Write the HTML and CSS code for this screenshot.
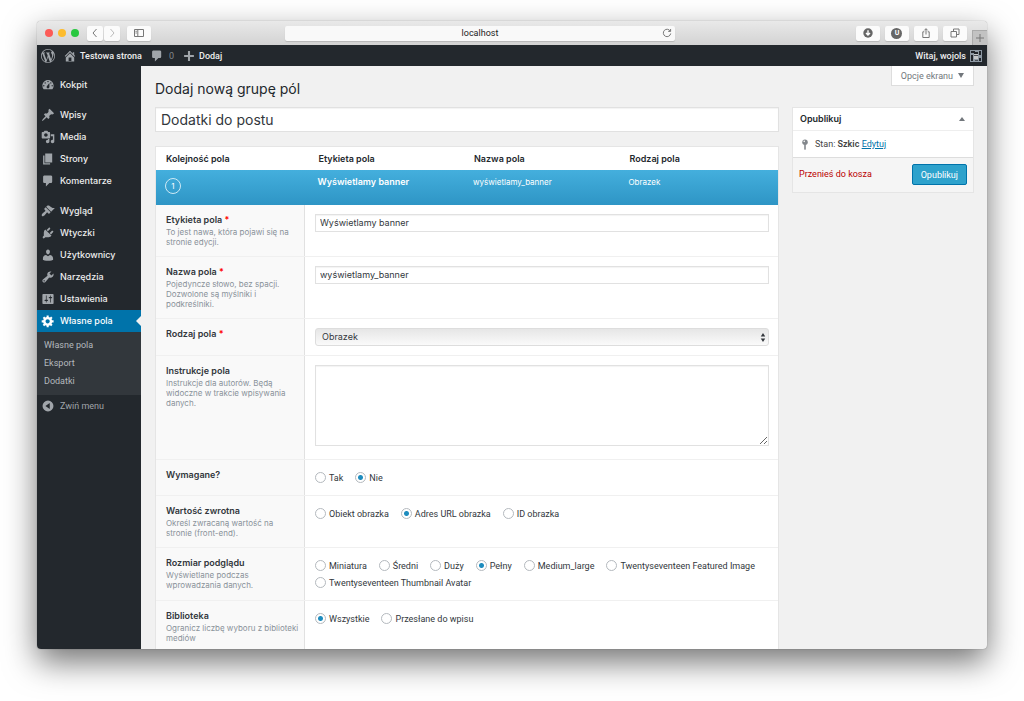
FILE: index.html
```html
<!DOCTYPE html>
<html lang="pl">
<head>
<meta charset="utf-8">
<title>Dodaj nową grupę pól</title>
<link rel="stylesheet" href="styles.css">
</head>
<body>
<svg class="sprite" aria-hidden="true">
  <symbol id="i-wp" viewBox="0 0 20 20"><path d="M20 10c0-5.51-4.49-10-10-10C4.48 0 0 4.49 0 10c0 5.52 4.48 10 10 10 5.51 0 10-4.48 10-10zM7.78 15.37L4.37 6.22c.55-.02 1.17-.08 1.17-.08.5-.06.44-1.13-.06-1.11 0 0-1.45.11-2.37.11-.18 0-.37 0-.58-.01C4.12 2.69 6.87 1.11 10 1.11c2.33 0 4.45.87 6.05 2.34-.68-.11-1.65.39-1.65 1.58 0 .74.45 1.36.9 2.1.35.61.55 1.36.55 2.46 0 1.49-1.4 5-1.4 5l-3.03-8.37c.54-.02.82-.17.82-.17.5-.05.44-1.25-.06-1.22 0 0-1.44.12-2.38.12-.87 0-2.33-.12-2.33-.12-.5-.03-.56 1.2-.06 1.22l.92.08 1.26 3.41zM17.41 10c.24-.64.74-1.87.43-4.25.7 1.29 1.05 2.71 1.05 4.25 0 3.29-1.73 6.24-4.4 7.78.97-2.59 1.94-5.2 2.92-7.78zM6.1 18.09C3.12 16.65 1.11 13.53 1.11 10c0-1.3.23-2.48.72-3.59C3.25 10.3 4.67 14.2 6.1 18.09zm4.03-6.63l2.58 6.98c-.86.29-1.76.45-2.71.45-.79 0-1.57-.11-2.29-.33.81-2.38 1.62-4.74 2.42-7.1z"/></symbol>
  <symbol id="i-home" viewBox="0 0 20 20"><path d="M16 8.5l1.53 1.53-1.06 1.06L10 4.6l-6.47 6.49-1.06-1.06L10 2.5l4 4v-2h2v4zm-6-2.46l6 5.99V18H4v-5.97zM12 17v-5H8v5h4z"/></symbol>
  <symbol id="i-comment" viewBox="0 0 20 20"><path d="M5 2h9c1.1 0 2 .9 2 2v7c0 1.1-.9 2-2 2h-2l-5 5v-5H5c-1.1 0-2-.9-2-2V4c0-1.1.9-2 2-2z"/></symbol>
  <symbol id="i-plus" viewBox="0 0 20 20"><path d="M17 8.5v3h-5.500v5.500h-3v-5.500H3v-3h5.500V3h3v5.500z"/></symbol>
  <symbol id="i-dash" viewBox="0 0 20 20"><path d="M3.76 16h12.48c1.1-1.37 1.76-3.11 1.76-5 0-4.42-3.58-8-8-8s-8 3.58-8 8c0 1.89.66 3.63 1.76 5zM10 4c.55 0 1 .45 1 1s-.45 1-1 1-1-.45-1-1 .45-1 1-1zM6 6c.55 0 1 .45 1 1s-.45 1-1 1-1-.45-1-1 .45-1 1-1zm8 0c.55 0 1 .45 1 1s-.45 1-1 1-1-.45-1-1 .45-1 1-1zm-5.37 5.550L12 7v6c0 1.100-.9 2-2 2s-2-.9-2-2c0-.57.24-1.080.63-1.450zM4 10c.55 0 1 .45 1 1s-.45 1-1 1-1-.45-1-1 .45-1 1-1zm12 0c.55 0 1 .45 1 1s-.45 1-1 1-1-.45-1-1 .45-1 1-1z" fill-rule="evenodd"/></symbol>
  <symbol id="i-pin" viewBox="0 0 20 20"><path d="M10.44 3.020l1.820-1.820 6.360 6.350-1.830 1.820c-1.050-.68-2.480-.57-3.410.36l-.75.75c-.92.93-1.040 2.350-.35 3.410l-1.830 1.820-2.410-2.410-2.800 2.790c-.42.42-3.380 2.710-3.800 2.290s1.860-3.390 2.280-3.810l2.790-2.790L4.100 9.360l1.830-1.820c1.050.69 2.480.57 3.400-.36l.75-.75c.93-.92 1.050-2.350.36-3.410z"/></symbol>
  <symbol id="i-media" viewBox="0 0 20 20"><path d="M13 11V4c0-.55-.45-1-1-1h-1.670L9 1H5L3.670 3H2c-.55 0-1 .45-1 1v7c0 .55.45 1 1 1h10c.55 0 1-.45 1-1zM7 4.500c1.380 0 2.500 1.120 2.500 2.500S8.380 9.500 7 9.500 4.500 8.380 4.500 7 5.620 4.500 7 4.500zM14 6h5v10.500c0 1.380-1.120 2.500-2.500 2.500S14 17.880 14 16.500s1.120-2.500 2.500-2.500c.17 0 .34.02.5.05V9h-3V6zm-4 8.050V13h2v3.500c0 1.380-1.120 2.500-2.500 2.500S7 17.880 7 16.500 8.120 14 9.500 14c.17 0 .34.02.5.05z"/></symbol>
  <symbol id="i-page" viewBox="0 0 20 20"><path d="M6 15V2h10v13H6zm-1 1h8v2H3V5h2v11z"/></symbol>
  <symbol id="i-brush" viewBox="0 0 20 20"><path d="M14.480 11.060L7.410 3.990l1.500-1.500c.5-.56 2.300-.47 3.510.32 1.210.8 1.430 1.280 2.910 2.100 1.180.64 2.450 1.260 4.450.85zm-.71.71L6.700 4.700 4.930 6.470c-.39.39-.39 1.020 0 1.410l1.060 1.060c.39.39.39 1.030 0 1.420-.6.6-1.430 1.110-2.210 1.690-.35.26-.7.53-1.010.84C1.430 14.230.4 16.080 1.400 17.070c.99 1 2.840-.03 4.180-1.360.31-.31.58-.66.85-1.020.57-.78 1.080-1.610 1.690-2.210.39-.39 1.020-.39 1.410 0l1.060 1.060c.39.39 1.020.39 1.410 0z"/></symbol>
  <symbol id="i-plug" viewBox="0 0 20 20"><path d="M13.110 4.360L9.870 7.600 8 5.730l3.240-3.240c.35-.34 1.050-.2 1.560.32.52.51.66 1.210.31 1.550zm-8 1.770l.91-1.120 9.010 9.010-1.190.84c-.71.71-2.630 1.160-3.820 1.160H6.140L4.900 17.260c-.59.59-1.540.59-2.120 0-.59-.58-.59-1.530 0-2.120l1.240-1.240v-3.880c0-1.130.4-3.190 1.090-3.890zm7.260 3.970l3.240-3.240c.34-.35 1.040-.21 1.550.31.52.51.66 1.210.31 1.550l-3.240 3.250z"/></symbol>
  <symbol id="i-user" viewBox="0 0 20 20"><path d="M10 9.250c-2.270 0-2.730-3.440-2.730-3.440C7 4.020 7.820 2 9.970 2c2.160 0 2.980 2.020 2.710 3.810 0 0-.41 3.440-2.680 3.440zm0 2.570L12.720 10c2.390 0 4.520 2.330 4.520 4.530v2.490s-3.650 1.130-7.240 1.130c-3.650 0-7.240-1.130-7.240-1.130v-2.490c0-2.250 1.940-4.480 4.470-4.480z"/></symbol>
  <symbol id="i-tool" viewBox="0 0 20 20"><path d="M16.680 9.770c-1.340 1.340-3.300 1.670-4.950.99l-5.410 6.520c-.99.99-2.590.99-3.580 0s-.99-2.590 0-3.570l6.520-5.420c-.68-1.650-.35-3.610.99-4.950 1.280-1.280 3.120-1.620 4.720-1.060l-2.890 2.890 2.820 2.820 2.860-2.870c.53 1.580.18 3.390-1.080 4.650zM3.810 16.210c.4.39 1.040.39 1.430 0 .4-.4.4-1.040 0-1.430-.39-.4-1.030-.4-1.430 0-.39.39-.39 1.030 0 1.430z"/></symbol>
  <symbol id="i-settings" viewBox="0 0 20 20"><path d="M18 16V4c0-.55-.45-1-1-1H3c-.55 0-1 .45-1 1v12c0 .55.45 1 1 1h14c.55 0 1-.45 1-1zM8 11h1c.55 0 1 .45 1 1s-.45 1-1 1H8v1.500c0 .28-.22.5-.5.5s-.5-.22-.5-.5V13H6c-.55 0-1-.45-1-1s.45-1 1-1h1V5.500c0-.28.22-.5.5-.5s.5.22.5.5V11zm5-2h-1c-.55 0-1-.45-1-1s.45-1 1-1h1V5.500c0-.28.22-.5.5-.5s.5.22.5.5V7h1c.55 0 1 .45 1 1s-.45 1-1 1h-1v5.500c0 .28-.22.5-.5.5s-.5-.22-.5-.5V9z"/></symbol>
  <symbol id="i-gear" viewBox="0 0 20 20"><path d="M18 12h-2.180c-.17.7-.44 1.350-.81 1.930l1.540 1.540-2.100 2.100-1.540-1.540c-.58.36-1.230.63-1.910.79V19H8v-2.180c-.68-.16-1.330-.43-1.910-.79l-1.540 1.540-2.120-2.120 1.540-1.540c-.36-.58-.63-1.230-.79-1.910H1V9.030h2.170c.16-.7.44-1.350.8-1.940L2.430 5.550l2.100-2.100 1.540 1.540c.58-.37 1.240-.64 1.930-.81V2h3v2.180c.68.16 1.330.43 1.910.79l1.540-1.540 2.120 2.120-1.540 1.540c.36.59.64 1.240.8 1.940H18V12zm-8.500 1.500c1.660 0 3-1.340 3-3s-1.340-3-3-3-3 1.340-3 3 1.340 3 3 3z"/></symbol>
  <symbol id="i-collapse" viewBox="0 0 20 20"><path fill-rule="evenodd" d="M10 2.200a7.800 7.800 0 1 0 0 15.600 7.800 7.800 0 0 0 0-15.600zM12.500 5.800v8.400L6.300 10z"/></symbol>
</svg>

<div class="window">
  <header class="toolbar">
    <div class="lights"><span class="light red"></span><span class="light amber"></span><span class="light green"></span></div>
    <div class="history">
      <button class="tool" aria-label="Wstecz"><svg viewBox="0 0 10 10"><path d="M6.500 1 3 5l3.500 4"/></svg></button>
      <button class="tool off" aria-label="Dalej"><svg viewBox="0 0 10 10"><path d="M3.500 1 7 5 3.500 9"/></svg></button>
    </div>
    <button class="tool wide" aria-label="Pasek boczny"><svg viewBox="0 0 10 10"><path d="M.5 1.500h9v7h-9zM3.800 1.500v7M1.500 3.300h1.300M1.500 5h1.300"/></svg></button>
    <span class="space-left"></span>
    <div class="address"><span>localhost</span><svg viewBox="0 0 10 10"><path d="M8.300 3.200A3.700 3.700 0 1 0 8.700 5.500M8.600 1v2.400H6.200"/></svg></div>
    <span class="space-right"></span>
    <div class="tools">
      <button class="tool wide" aria-label="Pobrane"><svg viewBox="0 0 10 10"><circle cx="5" cy="5" r="4.700" fill="#666" stroke="none"/><path d="M5 2.300v4.600M3 5.100l2 2 2-2" stroke="#fff" stroke-width="1.400"/></svg></button>
      <button class="tool wide" aria-label="uBlock"><span class="badge">U</span></button>
      <button class="tool wide" aria-label="Udostępnij"><svg viewBox="0 0 10 10"><path d="M3.300 3.800H1.800v5.700h6.400V3.800H6.700M5 6.500V.8M3.300 2.400 5 .7l1.700 1.700"/></svg></button>
      <button class="tool wide" aria-label="Karty"><svg viewBox="0 0 10 10"><path d="M1 3.500h5.500V9H1zM3.500 3.500V1H9v5.500H6.500"/></svg></button>
    </div>
    <button class="newtab" aria-label="Nowa karta"><svg viewBox="0 0 10 10"><path d="M5 1v8M1 5h8"/></svg></button>
  </header>

  <nav class="adminbar">
    <a href="#" aria-label="WordPress"><svg class="ico"><use href="#i-wp"/></svg></a>
    <a href="#"><svg class="ico"><use href="#i-home"/></svg>Testowa strona</a>
    <a href="#" class="count"><svg class="ico"><use href="#i-comment"/></svg>0</a>
    <a href="#"><svg class="ico"><use href="#i-plus"/></svg>Dodaj</a>
    <a href="#" class="account">Witaj, wojols
      <svg class="avatar" viewBox="0 0 12 12"><rect width="12" height="12" fill="#8d98a3"/><path fill="#20242a" d="M1 1h4v2H1zM9 1h2v4H9zM1 5h2v6H1zM9 8h2v3H9zM4 2h4v2H4z"/><path fill="#c4c7ca" d="M4 4h4v5H4z"/><path fill="#4b5057" d="M4 5h4v1H4zM5 10h3v1H5z"/></svg></a>
  </nav>

  <div class="body">
    <aside class="sidebar">
      <ul class="menu">
        <li><a href="#"><svg class="ico"><use href="#i-dash"/></svg>Kokpit</a></li>
        <li class="group"><a href="#"><svg class="ico"><use href="#i-pin"/></svg>Wpisy</a></li>
        <li><a href="#"><svg class="ico"><use href="#i-media"/></svg>Media</a></li>
        <li><a href="#"><svg class="ico"><use href="#i-page"/></svg>Strony</a></li>
        <li><a href="#"><svg class="ico"><use href="#i-comment"/></svg>Komentarze</a></li>
        <li class="group"><a href="#"><svg class="ico"><use href="#i-brush"/></svg>Wygląd</a></li>
        <li><a href="#"><svg class="ico"><use href="#i-plug"/></svg>Wtyczki</a></li>
        <li><a href="#"><svg class="ico"><use href="#i-user"/></svg>Użytkownicy</a></li>
        <li><a href="#"><svg class="ico"><use href="#i-tool"/></svg>Narzędzia</a></li>
        <li><a href="#"><svg class="ico"><use href="#i-settings"/></svg>Ustawienia</a></li>
        <li class="current"><a href="#"><svg class="ico"><use href="#i-gear"/></svg>Własne pola</a>
          <ul class="submenu">
            <li><a href="#">Własne pola</a></li>
            <li><a href="#">Eksport</a></li>
            <li><a href="#">Dodatki</a></li>
          </ul>
        </li>
        <li class="collapse"><button><svg class="ico"><use href="#i-collapse"/></svg>Zwiń menu</button></li>
      </ul>
    </aside>

    <main class="content">
      <div class="primary">
        <h1>Dodaj nową grupę pól</h1>
        <input class="title" type="text" value="Dodatki do postu" aria-label="Tytuł">
        <section class="panel">
          <table class="fields">
            <thead><tr><th>Kolejność pola</th><th>Etykieta pola</th><th>Nazwa pola</th><th>Rodzaj pola</th></tr></thead>
            <tbody><tr><td><span class="order">1</span></td><td><strong>Wyświetlamy banner</strong></td><td>wyświetlamy_banner</td><td>Obrazek</td></tr></tbody>
          </table>
          <div class="row">
            <div class="label"><label for="f-label">Etykieta pola <em>*</em></label><p>To jest nawa, która pojawi się na stronie edycji.</p></div>
            <div class="value"><input id="f-label" type="text" value="Wyświetlamy banner"></div>
          </div>
          <div class="row">
            <div class="label"><label for="f-name">Nazwa pola <em>*</em></label><p>Pojedyncze słowo, bez spacji. Dozwolone są myślniki i podkreślniki.</p></div>
            <div class="value"><input id="f-name" type="text" value="wyświetlamy_banner"></div>
          </div>
          <div class="row">
            <div class="label"><label for="f-type">Rodzaj pola <em>*</em></label></div>
            <div class="value"><div class="select"><select id="f-type"><option>Obrazek</option></select><svg viewBox="0 0 6 10"><path d="M3 0l2.500 4h-5zM3 10L.5 6h5z"/></svg></div></div>
          </div>
          <div class="row">
            <div class="label"><label for="f-help">Instrukcje pola</label><p>Instrukcje dla autorów. Będą widoczne w trakcie wpisywania danych.</p></div>
            <div class="value"><textarea id="f-help"></textarea></div>
          </div>
          <div class="row">
            <div class="label"><b id="l-req">Wymagane?</b></div>
            <div class="value radios" role="radiogroup" aria-labelledby="l-req">
              <label><input type="radio" name="req">Tak</label>
              <label><input type="radio" name="req" checked>Nie</label>
            </div>
          </div>
          <div class="row">
            <div class="label"><b id="l-ret">Wartość zwrotna</b><p>Określ zwracaną wartość na stronie (front-end).</p></div>
            <div class="value radios" role="radiogroup" aria-labelledby="l-ret">
              <label><input type="radio" name="ret">Obiekt obrazka</label>
              <label><input type="radio" name="ret" checked>Adres URL obrazka</label>
              <label><input type="radio" name="ret">ID obrazka</label>
            </div>
          </div>
          <div class="row">
            <div class="label"><b id="l-size">Rozmiar podglądu</b><p>Wyświetlane podczas wprowadzania danych.</p></div>
            <div class="value radios" role="radiogroup" aria-labelledby="l-size">
              <label><input type="radio" name="size">Miniatura</label>
              <label><input type="radio" name="size">Średni</label>
              <label><input type="radio" name="size">Duży</label>
              <label><input type="radio" name="size" checked>Pełny</label>
              <label><input type="radio" name="size">Medium_large</label>
              <label><input type="radio" name="size">Twentyseventeen Featured Image</label>
              <label><input type="radio" name="size">Twentyseventeen Thumbnail Avatar</label>
            </div>
          </div>
          <div class="row">
            <div class="label"><b id="l-lib">Biblioteka</b><p>Ogranicz liczbę wyboru z biblioteki mediów</p></div>
            <div class="value radios" role="radiogroup" aria-labelledby="l-lib">
              <label><input type="radio" name="lib" checked>Wszystkie</label>
              <label><input type="radio" name="lib">Przesłane do wpisu</label>
            </div>
          </div>
        </section>
      </div>

      <div class="secondary">
        <button class="screen-options">Opcje ekranu <span class="tri down"></span></button>
        <section class="publish">
          <h2>Opublikuj <span class="tri up"></span></h2>
          <p class="status"><svg viewBox="0 0 8 14"><circle cx="4" cy="4" r="3.500"/><path d="M3 7h2v6l-1 1-1-1z"/><circle cx="3" cy="3" r="1" fill="#fff"/></svg><span>Stan: <b>Szkic</b> <a href="#">Edytuj</a></span></p>
          <div class="actions"><a href="#">Przenieś do kosza</a><button>Opublikuj</button></div>
        </section>
      </div>
    </main>
  </div>
</div>
</body>
</html>
```
FILE: styles.css
```css
* { box-sizing: border-box; }

body {
  margin: 0;
  height: 100vh;
  padding: 21px 37px 52px;
  display: flex;
  background: #fff;
  color: #32373c;
  font: 9px/12px Roboto, "Liberation Sans", sans-serif;
}

h1, h2, p, ul { margin: 0; padding: 0; }
ul { list-style: none; }
a { text-decoration: none; }
button, input, select, textarea { font: inherit; color: inherit; margin: 0; }
button { border: 0; padding: 0; background: none; }
h1, h2, .menu, .fields, .label, input[type="text"], textarea, select {
  font-family: Inter, "Liberation Sans", sans-serif;
}
.sprite { position: absolute; width: 0; height: 0; }
.ico { width: 14px; height: 14px; flex: none; fill: #a0a5aa; }

.window {
  flex: 1;
  min-width: 0;
  display: flex;
  flex-direction: column;
  overflow: hidden;
  border-radius: 4px;
  background: #f1f1f1;
  box-shadow: 0 0 1px rgba(0, 0, 0, .5), 0 13px 32px rgba(0, 0, 0, .55);
}

/* Browser toolbar */
.toolbar {
  flex: none;
  height: 24px;
  display: flex;
  align-items: center;
  padding-left: 8px;
  background: linear-gradient(#e9e9e9, #d3d3d3);
}
.lights { display: flex; gap: 5px; margin-right: 8px; }
.light { width: 8px; height: 8px; border-radius: 50%; }
.red { background: #fc5b57; }
.amber { background: #fdbc2e; }
.green { background: #28c840; }
.history { display: flex; gap: 1px; margin-right: 7px; }
.tool {
  width: 16px;
  height: 15px;
  display: flex;
  align-items: center;
  justify-content: center;
  border-radius: 2px;
  background: #fbfbfb;
  box-shadow: 0 1px 1px rgba(0, 0, 0, .15);
}
.tool.wide { width: 24px; }
.toolbar svg { width: 10px; height: 10px; fill: none; stroke: #777; stroke-width: 1; }
.tool.off svg { stroke: #bbb; }
.space-left { flex: 134 1 0; }
.space-right { flex: 181 1 0; }
.address {
  flex: 389 1 0;
  height: 15px;
  display: flex;
  align-items: center;
  border-radius: 2px;
  background: #f9f9f9;
  box-shadow: 0 1px 1px rgba(0, 0, 0, .15);
  color: #222;
}
.address span { flex: 1; margin-left: 13px; text-align: center; }
.address svg { margin-right: 3px; }
.tools { display: flex; gap: 5px; margin-right: 5px; }
.badge {
  width: 11px;
  height: 11px;
  border-radius: 50%;
  background: #666;
  color: #fff;
  font-size: 7px;
  font-weight: 700;
  line-height: 11px;
}
.newtab {
  align-self: flex-end;
  width: 15px;
  height: 15px;
  display: flex;
  align-items: center;
  justify-content: center;
  border: solid #aaa;
  border-width: 1px 0 0 1px;
  background: #c2c2c2;
}

/* Admin bar */
.adminbar {
  flex: none;
  height: 21px;
  display: flex;
  align-items: center;
  gap: 8px;
  padding: 0 5px 0 4px;
  background: #23282d;
}
.adminbar a { display: flex; align-items: center; gap: 3px; color: #eee; font-weight: 500; }
.adminbar .count { color: #82878c; gap: 5px; font-weight: 400; }
.adminbar .account { margin-left: auto; gap: 4px; }
.avatar { width: 12px; height: 12px; }

.body { flex: 1; min-height: 0; display: flex; }

/* Side menu */
.sidebar { flex: none; width: 104px; padding-top: 8px; background: #23282d; }
.menu a, .collapse button {
  display: flex;
  align-items: center;
  gap: 5px;
  width: 100%;
  height: 22px;
  padding-left: 4px;
  color: #eee;
  font-weight: 500;
}
.menu .group { margin-top: 8px; }
.menu .current > a { position: relative; background: #0073aa; color: #fff; }
.menu .current > a .ico { fill: #fff; }
.menu .current > a::after {
  content: "";
  position: absolute;
  right: 0;
  top: 6px;
  border: 5px solid transparent;
  border-left: 0;
  border-right-color: #f1f1f1;
}
.submenu, .collapse { font-family: Roboto, "Liberation Sans", sans-serif; }
.menu .submenu { padding: 4px 0 5px; background: #32373c; }
.menu .submenu a { height: 18px; padding-left: 7px; color: #b4b9be; font-weight: 400; }
.collapse button { color: #a0a5aa; font-weight: 400; }

/* Content */
.content { flex: 1; min-width: 0; display: flex; gap: 13px; padding: 0 13px 0 14px; }
.primary { flex: 1; min-width: 0; }
.secondary { flex: none; width: 182px; }
h1 { padding: 12px 0 8px; font-size: 14px; line-height: 21px; font-weight: 400; color: #23282d; }
input[type="text"], textarea {
  display: block;
  width: 100%;
  border: 1px solid #e1e1e1;
  background: #fff;
  box-shadow: inset 0 1px 1px rgba(0, 0, 0, .05);
}
input.title { height: 25px; padding: 0 5px 1px; font-size: 14px; }

.panel { margin-top: 14px; border: 1px solid #e5e5e5; background: #fff; }
.fields { width: 100%; table-layout: fixed; border-collapse: collapse; }
.fields th, .fields td { padding: 0 7px; text-align: left; }
.fields th:first-child, .fields td:first-child { padding-left: 10px; }
.fields th { height: 23px; font-weight: 600; color: #23282d; }
.fields tbody tr { background: linear-gradient(#44afdd, #2e95c5); }
.fields td { height: 35px; padding: 6px 6px 0; vertical-align: top; color: #fff; font-size: 8px; }
.fields td:first-child { padding-left: 9px; }
.fields strong { font-size: 9px; font-weight: 600; }
.order {
  display: block;
  width: 16px;
  height: 16px;
  margin-top: 2px;
  border: 1px solid #cfeaf6;
  border-radius: 50%;
  line-height: 14px;
  text-align: center;
}

.row { display: grid; grid-template-columns: 149px 1fr; border-bottom: 1px solid #f0f0f0; }
.label { padding: 9px 4px 9px 10px; border-right: 1px solid #e1e1e1; background: #f9f9f9; }
.label label, .label b { display: block; font-weight: 600; color: #32373c; }
.label em { color: #f00; font-style: normal; }
.label p { margin-top: 1px; padding-right: 1px; font-size: 8px; line-height: 10px; color: #899299; }
.value { padding: 9px 9px 9px 10px; }
.value input[type="text"] { height: 18px; padding: 0 4px 1px; }
.select { position: relative; }
.select select {
  display: block;
  width: 100%;
  height: 18px;
  padding: 0 6px;
  appearance: none;
  border: 1px solid #ddd;
  border-radius: 3px;
  background: linear-gradient(#e6e6e6, #fafafa);
}
.select svg { position: absolute; right: 3px; top: 5px; width: 6px; height: 9px; fill: #32373c; pointer-events: none; }
.value textarea { height: 81px; margin-bottom: 4px; }
.radios { display: flex; flex-wrap: wrap; align-content: flex-start; column-gap: 12px; }
.radios label { display: flex; align-items: center; gap: 3px; height: 17px; }
.radios input {
  appearance: none;
  width: 11px;
  height: 11px;
  border: 1px solid #b4b9be;
  border-radius: 50%;
  background: #fff;
}
.radios input:checked { background: radial-gradient(circle, #1e8cbe 2px, #fff 3px); }

/* Right column */
.screen-options {
  display: flex;
  align-items: center;
  justify-content: center;
  gap: 5px;
  height: 20px;
  margin: 0 0 21px auto;
  padding: 0 9px;
  border: solid #ddd;
  border-width: 0 1px 1px;
  background: #fff;
  color: #72777c;
}
.tri { border: 3px solid transparent; }
.tri.down { border-top: 5px solid #72777c; border-bottom: 0; }
.tri.up { border-bottom: 4px solid #72777c; border-top: 0; }
.publish { border: 1px solid #e5e5e5; background: #fff; }
.publish h2 {
  display: flex;
  align-items: center;
  justify-content: space-between;
  height: 23px;
  padding: 0 8px 0 7px;
  border-bottom: 1px solid #eee;
  font-size: 9px;
  font-weight: 600;
  color: #23282d;
}
.status { display: flex; align-items: center; gap: 6px; height: 26px; padding-left: 8px; color: #444; }
.status svg { width: 8px; height: 11px; fill: #82878c; }
.status b { font-weight: 600; }
.status a { color: #0073aa; text-decoration: underline; }
.actions {
  display: flex;
  justify-content: space-between;
  padding: 6px 6px 7px;
  border-top: 1px solid #ddd;
  background: #f5f5f5;
}
.actions a { padding-top: 4px; color: #b00; }
.actions button {
  height: 21px;
  padding: 0 8px;
  border: 1px solid #0073aa;
  border-radius: 2px;
  background: #2ea2cc;
  color: #fff;
}
```
